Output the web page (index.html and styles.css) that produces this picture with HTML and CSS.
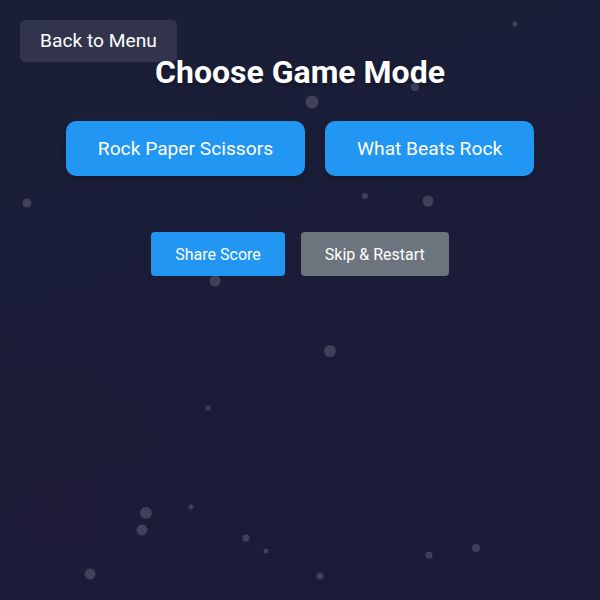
FILE: index.html
```html
<!DOCTYPE html>
<html lang="en">
<head>
<meta charset="utf-8">
<title>Choose Game Mode</title>
<link rel="stylesheet" href="styles.css">
</head>
<body>
  <div class="particles" aria-hidden="true">
    <span class="dot" style="left:515px;top:24px;width:5px;height:5px"></span>
    <span class="dot" style="left:312px;top:102px;width:13px;height:13px"></span>
    <span class="dot" style="left:415px;top:87px;width:8px;height:8px"></span>
    <span class="dot" style="left:121px;top:129px;width:6px;height:6px"></span>
    <span class="dot" style="left:27px;top:203px;width:9px;height:9px"></span>
    <span class="dot" style="left:365px;top:196px;width:6px;height:6px"></span>
    <span class="dot" style="left:428px;top:201px;width:11px;height:11px"></span>
    <span class="dot" style="left:215px;top:281px;width:11px;height:11px"></span>
    <span class="dot" style="left:330px;top:351px;width:12px;height:12px"></span>
    <span class="dot" style="left:208px;top:408px;width:5px;height:5px"></span>
    <span class="dot" style="left:146px;top:513px;width:12px;height:12px"></span>
    <span class="dot" style="left:142px;top:530px;width:11px;height:11px"></span>
    <span class="dot" style="left:191px;top:507px;width:5px;height:5px"></span>
    <span class="dot" style="left:246px;top:538px;width:7px;height:7px"></span>
    <span class="dot" style="left:266px;top:551px;width:5px;height:5px"></span>
    <span class="dot" style="left:90px;top:574px;width:11px;height:11px"></span>
    <span class="dot" style="left:320px;top:576px;width:7px;height:7px"></span>
    <span class="dot" style="left:429px;top:555px;width:7px;height:7px"></span>
    <span class="dot" style="left:476px;top:548px;width:8px;height:8px"></span>
  </div>

  <button class="back-btn">Back to Menu</button>

  <main class="screen">
    <h1 class="title">Choose Game Mode</h1>
    <div class="mode-row">
      <button class="mode-btn">Rock Paper Scissors</button>
      <button class="mode-btn">What Beats Rock</button>
    </div>
    <div class="action-row">
      <button class="action-btn share">Share Score</button>
      <button class="action-btn skip">Skip &amp; Restart</button>
    </div>
  </main>
</body>
</html>
```

FILE: styles.css
```css
* {
  box-sizing: border-box;
}

html, body {
  margin: 0;
  height: 100%;
}

body {
  font-family: Roboto, "Liberation Sans", sans-serif;
  color: #fff;
  background:
    radial-gradient(ellipse 60% 50% at 10% 85%, rgba(50, 20, 45, 0.12), transparent 70%),
    linear-gradient(160deg, #1a1f37 0%, #1b1d38 50%, #1b1c3a 100%);
  overflow: hidden;
  position: relative;
}

.particles {
  position: absolute;
  inset: 0;
  pointer-events: none;
}

.dot {
  position: absolute;
  border-radius: 50%;
  background: rgba(255, 255, 255, 0.16);
  transform: translate(-50%, -50%);
}

button {
  font-family: inherit;
  color: #fff;
  border: none;
  cursor: pointer;
}

.back-btn {
  position: absolute;
  top: 20px;
  left: 20px;
  width: 157px;
  height: 42px;
  padding: 0;
  font-size: 19.2px;
  line-height: 22px;
  background: rgba(255, 255, 255, 0.1);
  border-radius: 5px;
}

.screen {
  position: relative;
  display: flex;
  flex-direction: column;
  align-items: center;
  padding-top: 53px;
}

.title {
  margin: 0;
  font-size: 32px;
  line-height: 38px;
  font-weight: 700;
  text-shadow: 0 2px 4px rgba(0, 0, 0, 0.3);
}

.mode-row {
  display: flex;
  gap: 20px;
  margin-top: 30px;
}

.mode-btn {
  height: 55px;
  padding: 0 32px;
  font-size: 19.2px;
  background: #2196f3;
  border-radius: 10px;
  box-shadow: 0 4px 8px rgba(0, 0, 0, 0.2);
}

.action-row {
  display: flex;
  gap: 16px;
  margin-top: 56px;
}

.action-btn {
  height: 44px;
  padding: 0 24px;
  font-size: 16px;
  border-radius: 4px;
}

.share {
  background: #2196f3;
}

.skip {
  background: #6c757d;
}
```
